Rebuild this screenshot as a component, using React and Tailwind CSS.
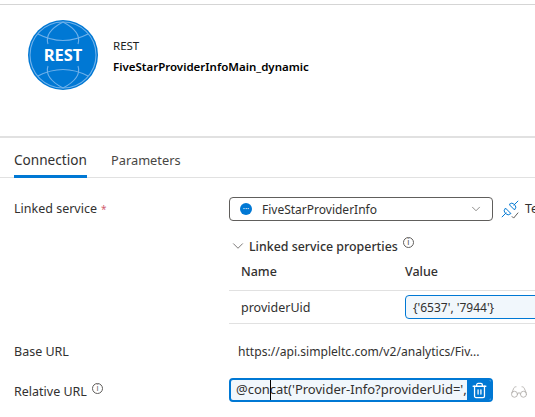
import React from "react";
import { LuChevronDown, LuTrash2, LuGlasses } from "react-icons/lu";

const font = "font-['Noto_Sans','Open_Sans',sans-serif]";

const InfoDot = () => (
  <span className="flex h-[11px] w-[11px] items-center justify-center rounded-full border border-[#605e5c] text-[8px] leading-none text-[#605e5c]">
    i
  </span>
);

const RestLogo = () => (
  <svg width="70" height="70" viewBox="0 0 70 70" className="shrink-0">
    <circle cx="35" cy="35" r="35" fill="#0078d4" />
    <g fill="none" stroke="#6fb1ea" strokeWidth="1.1">
      <circle cx="35" cy="35" r="33" />
      <path d="M10 14 Q35 27 60 14" />
      <path d="M10 56 Q35 43 60 56" />
      <path d="M35 2 Q16 12 20 24" />
      <path d="M35 2 Q54 12 50 24" />
      <path d="M35 68 Q16 58 20 46" />
      <path d="M35 68 Q54 58 50 46" />
    </g>
    <text x="35" y="41" textAnchor="middle" fill="#fff" fontSize="16.5" fontWeight="700" fontFamily="Noto Sans, sans-serif">
      REST
    </text>
  </svg>
);

const TestIcon = () => (
  <svg width="20" height="20" viewBox="0 0 22 22" fill="none" stroke="#0078d4" strokeWidth="1.1" className="shrink-0">
    <path d="M2 20 L7 15" />
    <path d="M15 7 L20 2" />
    <path d="M6 10 L12 16 Q9 19 6 16 Q3 13 6 10 Z" />
    <path d="M10 6 L16 12 Q19 9 16 6 Q13 3 10 6 Z" />
    <path d="M13 19 L15 21 L20 15" stroke="#605e5c" />
  </svg>
);

const Row = ({ label, className, children }) => (
  <div className={`flex items-center ${className}`}>
    <div className="flex w-[229px] shrink-0 items-center gap-1 pl-3.5 text-[12.5px] text-[#323130]">{label}</div>
    {children}
  </div>
);

export default function App() {
  return (
    <div className={`${font} h-[417px] w-[535px] overflow-hidden bg-white text-[#323130]`}>
      <div className="mt-1 h-[1px] bg-[#d5d5d5]" />
      <div className="flex h-[133px] items-start gap-[15px] border-b-2 border-[#e1e1e1] pl-7 pt-[15px]">
        <RestLogo />
        <div className="pt-[16px] text-[11.5px] text-[#201f1e]">
          <div className="leading-[20px]">REST</div>
          <div className="text-[11.5px] font-semibold leading-[22px] text-black">FiveStarProviderInfoMain_dynamic</div>
        </div>
      </div>
      <div className="flex h-[40px] gap-6 border-b border-[#e1e1e1] pl-3.5">
        <div className="flex h-[40px] w-[73px] items-center border-b-[3px] border-[#0078d4] pt-[8px] text-[13.6px]">Connection</div>
        <div className="flex h-[40px] items-center pt-[8px] pb-[3px] text-[12.8px] text-[#484644]">Parameters</div>
      </div>

      <Row className="mt-[19px] h-6" label={<>Linked service <span className="text-[10px] text-[#d1606f]">*</span></>}>
        <div className="flex h-6 w-[264px] shrink-0 items-center rounded-sm border border-[#605e5c] pl-[10px] pr-[9px] text-[12px] text-[#323130]">
          <span className="mr-[10px] flex h-[12px] w-[12px] items-center justify-center rounded-full bg-[#0078d4] text-[8px] leading-none text-white">
            ···
          </span>
          <span className="flex-1 pt-px">FiveStarProviderInfo</span>
          <LuChevronDown className="text-[#605e5c]" size={14} strokeWidth={1.2} />
        </div>
        <div className="ml-[7px] flex shrink-0 items-center gap-[5px] text-[12.5px]">
          <TestIcon />
          <span className="pt-px">Test connection</span>
        </div>
      </Row>

      <div className="ml-[229px] mt-[15px]">
        <div className="flex h-[20px] items-center text-[12.4px] font-medium">
          <LuChevronDown size={18} strokeWidth={1.1} className="mr-[2px] shrink-0 text-[#605e5c]" />
          <span className="pt-[2px]">Linked service properties</span>
          <span className="mb-2 ml-[5px]">
            <InfoDot />
          </span>
        </div>
        <div className="mt-[2px] flex h-[33px] items-center border-b border-[#e1e1e1] pb-[3px] text-[12.5px] font-medium">
          <div className="w-[176px] shrink-0 pl-3">Name</div>
          <div>Value</div>
        </div>
        <div className="flex h-[33px] items-center border-b border-[#e1e1e1] text-[12.5px]">
          <div className="w-[176px] shrink-0 pl-3 pt-[3px]">providerUid</div>
          <div className="flex h-6 w-[200px] shrink-0 items-center rounded-sm border border-[#0078d4] bg-[#f1f7fc] pl-[7px] pt-px text-[12px]">
            {"{'6537', '7944'}"}
          </div>
        </div>
      </div>

      <Row className="mt-[18px] h-5" label={<span className="pt-px">Base URL</span>}>
        <div className="pl-[9px] text-[12.1px] whitespace-nowrap">https://api.simpleltc.com/v2/analytics/Fiv...</div>
      </Row>

      <Row className="mt-[16px] h-6" label={<><span className="pt-[4px]">Relative URL</span> <span className="mb-1 ml-px"><InfoDot /></span></>}>
        <div className="flex h-6 w-[264px] shrink-0 items-center overflow-hidden rounded-sm border-2 border-[#0078d4] bg-[#f1f7fc] text-[13px]">
          <div className="relative min-w-0 flex-1 overflow-hidden whitespace-nowrap pl-[5px]">
            @concat('Provider-Info?providerUid=',c
            <span className="absolute left-[39px] top-0 h-full w-px bg-black" />
          </div>
          <div className="flex h-full w-[24px] shrink-0 items-center justify-center bg-[#0078d4]">
            <LuTrash2 size={17} strokeWidth={1.8} className="text-white" />
          </div>
        </div>
        <LuGlasses size={18} strokeWidth={1.2} className="ml-[17px] mt-[3px] shrink-0 text-[#b3b0ad]" />
      </Row>
    </div>
  );
}
